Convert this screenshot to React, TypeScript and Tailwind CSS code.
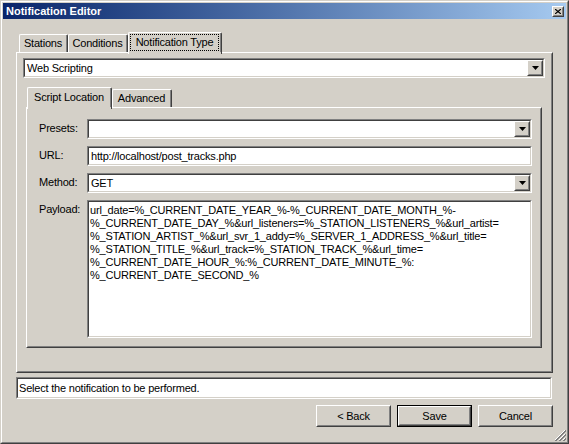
import type { ReactNode } from 'react'

const payloadLines = [
  'url_date=%_CURRENT_DATE_YEAR_%-%_CURRENT_DATE_MONTH_%-',
  '%_CURRENT_DATE_DAY_%&url_listeners=%_STATION_LISTENERS_%&url_artist=',
  '%_STATION_ARTIST_%&url_svr_1_addy=%_SERVER_1_ADDRESS_%&url_title=',
  '%_STATION_TITLE_%&url_track=%_STATION_TRACK_%&url_time=',
  '%_CURRENT_DATE_HOUR_%:%_CURRENT_DATE_MINUTE_%:',
  '%_CURRENT_DATE_SECOND_%',
]

function Sunken({ className = '', children }: { className?: string; children?: ReactNode }) {
  return (
    <div className={`border border-t-[#808080] border-l-[#808080] border-r-white border-b-white ${className}`}>
      <div className="h-full border border-t-[#404040] border-l-[#404040] border-r-[#d4d0c8] border-b-[#d4d0c8] bg-white">
        {children}
      </div>
    </div>
  )
}

function Raised({ className = '', children }: { className?: string; children?: ReactNode }) {
  return (
    <div className={`border border-t-white border-l-white border-r-[#404040] border-b-[#404040] bg-[#d4d0c8] ${className}`}>
      <div className="flex h-full items-center justify-center border border-t-[#d4d0c8] border-l-[#d4d0c8] border-r-[#808080] border-b-[#808080]">
        {children}
      </div>
    </div>
  )
}

function Combo({ value = '', className = '' }: { value?: string; className?: string }) {
  return (
    <Sunken className={`h-[20px] ${className}`}>
      <div className="flex h-full items-center">
        <span className="flex-1 truncate pl-[2px]">{value}</span>
        <Raised className="h-[16px] w-[16px]">
          <svg width="7" height="4" viewBox="0 0 7 4">
            <path d="M0 0h7L3.5 4z" fill="#000" />
          </svg>
        </Raised>
      </div>
    </Sunken>
  )
}

function Tab({
  label,
  active = false,
  focused = false,
  className = '',
}: {
  label: string
  active?: boolean
  focused?: boolean
  className?: string
}) {
  return (
    <div
      className={`relative rounded-t-[2px] border-t border-l border-r border-t-white border-l-white border-r-[#404040] bg-[#d4d0c8]
        ${active ? 'z-10 -mb-[2px] h-[22px] pb-[2px]' : 'h-[18px]'} ${className}`}
    >
      <div className="flex h-full items-center justify-center border-r border-r-[#808080] p-px">
        {focused ? (
          <span className="flex h-full w-full items-center justify-center border border-dotted border-black">{label}</span>
        ) : (
          label
        )}
      </div>
    </div>
  )
}

function Panel({ className = '', children }: { className?: string; children?: ReactNode }) {
  return (
    <div className={`border border-t-white border-l-white border-r-[#404040] border-b-[#404040] ${className}`}>
      <div className="h-full border border-t-[#d4d0c8] border-l-[#d4d0c8] border-r-[#808080] border-b-[#808080]">
        {children}
      </div>
    </div>
  )
}

function Field({ label, children }: { label: string; children: ReactNode }) {
  return (
    <div className="flex items-start">
      <span className="w-[48px] shrink-0 pt-[3px]">{label}</span>
      <div className="flex-1">{children}</div>
    </div>
  )
}

function PushButton({ label, isDefault = false }: { label: string; isDefault?: boolean }) {
  return (
    <div className={`h-[22px] w-[75px] ${isDefault ? 'border border-black' : ''}`}>
      <Raised className="h-full w-full">{label}</Raised>
    </div>
  )
}

export default function App() {
  return (
    <div
      className="h-[444px] w-[569px] border border-t-[#d4d0c8] border-l-[#d4d0c8] border-r-[#404040] border-b-[#404040] bg-[#d4d0c8] text-[11px] leading-[13px] tracking-[-0.2px] text-black"
      style={{ fontFamily: '"Liberation Sans", Arial, sans-serif' }}
    >
      <div className="flex h-full flex-col border border-t-white border-l-white border-r-[#808080] border-b-[#808080] p-px">
        {/* caption */}
        <div className="flex h-[16px] items-center justify-between bg-gradient-to-r from-[#0a246a] to-[#a6caf0] pl-[3px] pr-[2px]">
          <span className="font-bold tracking-normal text-white">Notification Editor</span>
          <Raised className="h-[11px] w-[12px]">
            <svg width="6" height="5" viewBox="0 0 6 5">
              <path d="M0 0l6 5M6 0L0 5" stroke="#000" strokeWidth="1.2" />
            </svg>
          </Raised>
        </div>

        <div className="relative flex flex-1 flex-col px-[13px] pt-[13px]">
          <div className="flex h-[20px] items-end">
            <Tab label="Stations" className="ml-[3px] w-[49px]" />
            <Tab label="Conditions" className="w-[60px]" />
            <Tab label="Notification Type" active focused className="w-[94px]" />
          </div>

          <Panel className="h-[321px]">
            <div className="pl-[5px] pr-[6px] pt-[4px]">
              <Combo value="Web Scripting" />

              <div className="ml-[3px] mt-[9px] flex h-[20px] items-end">
                <Tab label="Script Location" active className="ml-[1px] w-[85px]" />
                <Tab label="Advanced" className="w-[60px]" />
              </div>

              <Panel className="ml-[3px] h-[241px] w-[516px]">
                <div className="flex flex-col gap-[7px] pl-[11px] pr-[8px] pt-[10px]">
                  <Field label="Presets:">
                    <Combo />
                  </Field>
                  <Field label="URL:">
                    <Sunken className="h-[20px]">
                      <div className="flex h-full items-center pl-[2px]">http://localhost/post_tracks.php</div>
                    </Sunken>
                  </Field>
                  <Field label="Method:">
                    <Combo value="GET" />
                  </Field>
                  <Field label="Payload:">
                    <Sunken className="h-[138px]">
                      <div className="pl-[1px] pt-[2px]">
                        {payloadLines.map((line) => (
                          <div key={line} className="whitespace-pre">{line}</div>
                        ))}
                      </div>
                    </Sunken>
                  </Field>
                </div>
              </Panel>
            </div>
          </Panel>

          <Sunken className="mt-[4px] h-[22px] w-[536px]">
            <div className="flex h-full items-center pl-px">Select the notification to be performed.</div>
          </Sunken>

          <div className="mt-[6px] flex justify-end gap-[6px]">
            <PushButton label="< Back" />
            <PushButton label="Save" isDefault />
            <PushButton label="Cancel" />
          </div>

          {/* size grip */}
          <svg className="absolute bottom-0 right-0" width="12" height="12" viewBox="0 0 12 12">
            <path d="M11 1L1 11M11 5L5 11M11 9L9 11" stroke="#fff" strokeWidth="1" />
            <path d="M12 1L1 12M12 2L2 12M12 5L5 12M12 6L6 12M12 9L9 12M12 10L10 12" stroke="#808080" strokeWidth="1" />
          </svg>
        </div>
      </div>
    </div>
  )
}
